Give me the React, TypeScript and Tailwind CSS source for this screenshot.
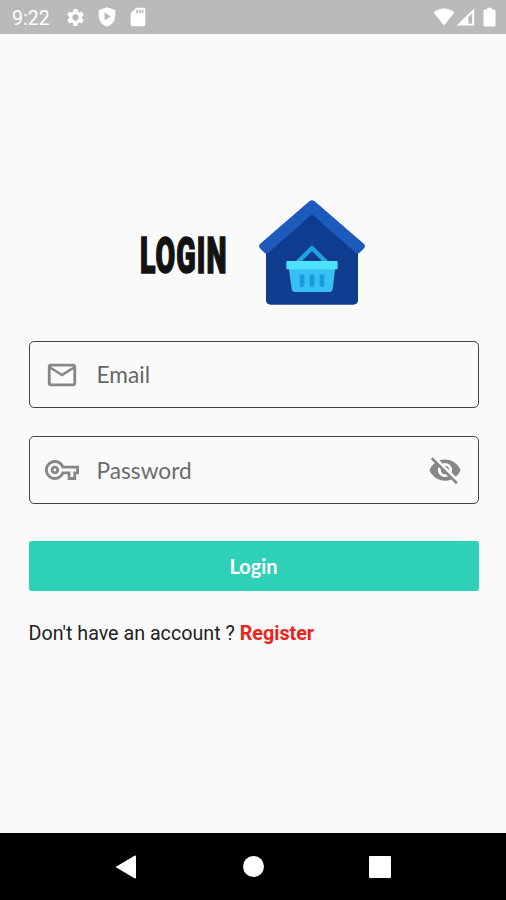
import React from 'react';
import { MdSettings, MdSdCard, MdMailOutline, MdOutlineVpnKey, MdVisibilityOff } from 'react-icons/md';

const StatusBar: React.FC = () => {
  return (
    <header className="flex h-[34px] shrink-0 items-center bg-[#bababa] pl-3 pr-1.5 text-white">
      <span className="w-[53px] pt-[3px] font-['Roboto',sans-serif] text-[19.5px] leading-none">9:22</span>
      <MdSettings className="size-[21px]" />
      <svg className="ml-3 h-5 w-[18px]" viewBox="0 0 18 20" fill="currentColor">
        <path fillRule="evenodd" d="M9 0.3L17.2 3V9C17.2 14 14 18 9 19.7C4 18 0.8 14 0.8 9V3ZM6.6 5.6V13.2L12.9 9.4Z" />
      </svg>
      <MdSdCard className="ml-[11px] size-[22px]" />
      <div className="ml-auto flex items-center pr-[1px]">
        <svg className="h-[18px] w-[22px]" viewBox="0 0 22 18" fill="currentColor">
          <path d="M11 17.5L0.5 4.5C6.5 -0.8 15.5 -0.8 21.5 4.5Z" />
        </svg>
        <svg className="ml-[1px] h-[18px] w-[19px]" viewBox="0 0 19 18" fill="currentColor">
          <path fillRule="evenodd" d="M0.5 17.5L18.2 0.5V17.5ZM12.3 9V15.7H16.2V5.3Z" />
        </svg>
        <svg className="ml-2 mr-[3px] h-5 w-[13px]" viewBox="0 0 13 20" fill="currentColor">
          <path d="M4 0.7H9V2.4H11.3Q12.5 2.4 12.5 3.6V18.3Q12.5 19.5 11.3 19.5H1.7Q0.5 19.5 0.5 18.3V3.6Q0.5 2.4 1.7 2.4H4Z" />
        </svg>
      </div>
    </header>
  );
};

const HouseLogo: React.FC = () => {
  return (
    <svg className="size-[108px] shrink-0" viewBox="384 27 324 324">
      <path fill="#103c8f" d="M408 165L546 55L684 165V330Q684 344 670 344H422Q408 344 408 330Z" />
      <path fill="#1c5abb" d="M538 34Q546 27 554 34L703 163Q708 169 703 174L688 189Q683 193 677 188L546 73L415 188Q409 193 404 189L389 174Q384 169 389 163Z" />
      <path fill="none" stroke="#20a2e2" strokeWidth="13" strokeLinejoin="round" d="M500 220L546 174L592 220" />
      <path fill="#37c1f2" d="M476 232H616L608 297Q607 306 598 306H495Q486 306 485 297Z" />
      <rect x="469" y="213" width="154" height="25" rx="3" fill="#4fe2fc" />
      <g fill="#179ddd">
        <rect x="509" y="253" width="14" height="38" rx="6" />
        <rect x="539" y="253" width="14" height="38" rx="6" />
        <rect x="569" y="253" width="14" height="38" rx="6" />
      </g>
    </svg>
  );
};

const NavBar: React.FC = () => {
  return (
    <nav className="flex h-[67px] shrink-0 items-center justify-between bg-black pl-[115px] pr-[115px] text-white">
      <svg className="h-6 w-[22px]" viewBox="0 0 22 24" fill="currentColor">
        <path d="M0.5 12L19.5 0.7Q21 0 21 1.5V22.5Q21 24 19.5 23.3Z" />
      </svg>
      <span className="size-[21px] rounded-full bg-white" />
      <span className="size-[22px] rounded-[1px] bg-white" />
    </nav>
  );
};

const App: React.FC = () => {
  return (
    <div className="flex h-[900px] w-[506px] flex-col overflow-hidden bg-[#fafafa]">
      <StatusBar />
      <main className="flex flex-1 flex-col px-7 pt-[165px]">
        <div className="flex h-[108px] items-center pl-[112px]">
          <h1 className="w-[118px] pt-[5px] font-['Roboto',sans-serif] text-[50px] font-black leading-none text-[#121212]">
            <span className="inline-block origin-left scale-x-[0.57] tracking-[1.8px] [-webkit-text-stroke:1.6px_#121212]">LOGIN</span>
          </h1>
          <HouseLogo />
        </div>

        <label className="ml-[0.5px] mt-[34px] flex h-[67px] w-[450px] items-center rounded-[5px] border border-[#444] pl-[15px] text-[#878787]">
          <MdMailOutline className="size-[34px]" />
          <span className="ml-[18px] pt-0.5 font-['Lato',sans-serif] text-[22.7px] text-[#666]">Email</span>
        </label>

        <label className="ml-[0.5px] mt-[28px] flex h-[68px] w-[450px] items-center rounded-[5px] border border-[#444] pl-[15px] pr-4 text-[#878787]">
          <MdOutlineVpnKey className="size-[34px]" />
          <span className="ml-[18px] pt-0.5 font-['Lato',sans-serif] text-[22.7px] text-[#6c6c6c]">Password</span>
          <MdVisibilityOff className="ml-auto size-[34px]" />
        </label>

        <button className="ml-[0.5px] mt-[37px] h-[50px] w-[450px] rounded-[3px] bg-[#2ed0b7] font-['Lato',sans-serif] text-[20px] font-bold text-white">
          Login
        </button>

        <p className="ml-[0.5px] mt-[29px] whitespace-pre font-['Roboto',sans-serif] text-[19.7px] leading-[28px] text-[#222]">
          Don't have an account ? <span className="font-bold text-[#ee221b]">Register</span>
        </p>
      </main>
      <NavBar />
    </div>
  );
};

export default App;
